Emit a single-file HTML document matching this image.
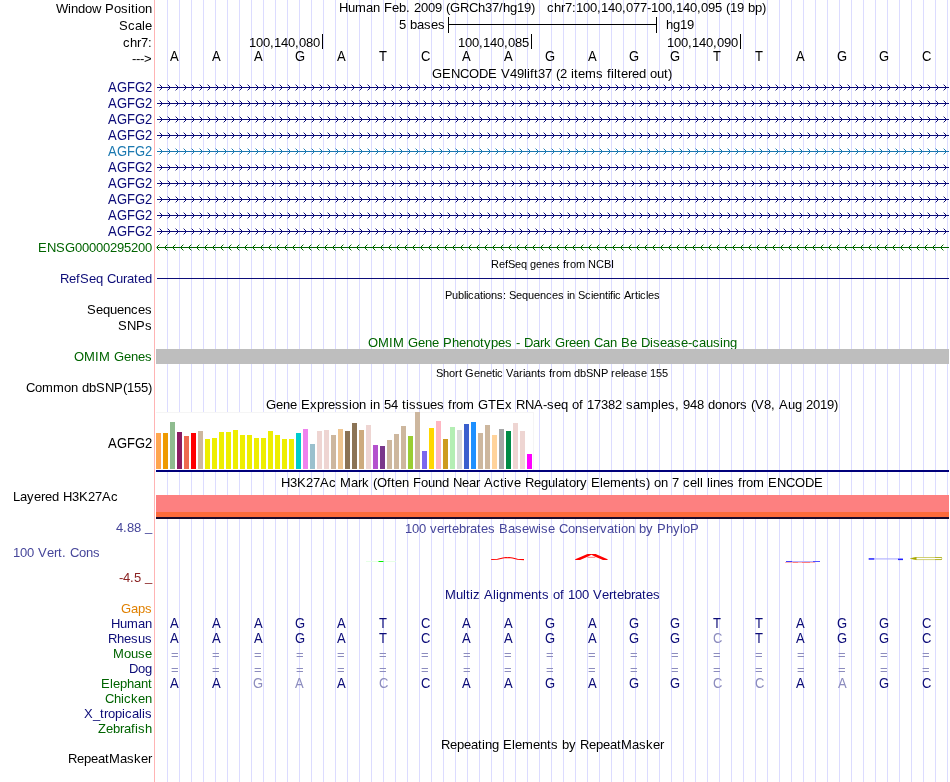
<!DOCTYPE html>
<html><head><meta charset="utf-8"><title>UCSC Genome Browser chr7:100,140,077-100,140,095</title>
<style>
html,body{margin:0;padding:0;background:#fff;}
svg{display:block;will-change:transform;font-family:"Liberation Sans",sans-serif;}
</style></head><body>
<svg width="950" height="782" viewBox="0 0 950 782">
<rect width="950" height="782" fill="#fff"/>
<path d="M167.5 0V782 M179.5 0V782 M191.5 0V782 M203.5 0V782 M215.5 0V782 M227.5 0V782 M239.5 0V782 M251.5 0V782 M263.5 0V782 M275.5 0V782 M287.5 0V782 M299.5 0V782 M311.5 0V782 M323.5 0V782 M335.5 0V782 M347.5 0V782 M359.5 0V782 M371.5 0V782 M383.5 0V782 M395.5 0V782 M407.5 0V782 M419.5 0V782 M431.5 0V782 M443.5 0V782 M455.5 0V782 M467.5 0V782 M479.5 0V782 M491.5 0V782 M503.5 0V782 M515.5 0V782 M527.5 0V782 M539.5 0V782 M551.5 0V782 M563.5 0V782 M575.5 0V782 M587.5 0V782 M599.5 0V782 M611.5 0V782 M623.5 0V782 M635.5 0V782 M647.5 0V782 M659.5 0V782 M671.5 0V782 M683.5 0V782 M695.5 0V782 M707.5 0V782 M719.5 0V782 M731.5 0V782 M743.5 0V782 M755.5 0V782 M767.5 0V782 M779.5 0V782 M791.5 0V782 M803.5 0V782 M815.5 0V782 M827.5 0V782 M839.5 0V782 M851.5 0V782 M863.5 0V782 M875.5 0V782 M887.5 0V782 M899.5 0V782 M911.5 0V782 M923.5 0V782 M935.5 0V782 M947.5 0V782" stroke="#dcdcff" stroke-width="1" fill="none" shape-rendering="crispEdges"/>
<rect x="154" y="0" width="1" height="782" fill="#ffb4b4" shape-rendering="crispEdges"/>
<text x="56 68 71 78 85 92 101 105 114 121 128 131 135 138 145" y="13" fill="#000" font-size="13" >Window Position</text>
<text x="119 128 135 142 145" y="29.5" fill="#000" font-size="13" >Scale</text>
<text x="123 130 137 141 148" y="46.5" fill="#000" font-size="13" >chr7:</text>
<text x="132 136 140 144" y="63" fill="#000" font-size="13" >---&gt;</text>
<text x="339 348 355 366 373 380 384 392 399 406 410 414 421 428 435 442 446 450 460 469 478 485 492 499 503 510 517 524 531 535 539 543 547 554 561 565 572 576 583 590 597 601 608 615 622 626 633 640 647 651 658 665 672 676 683 690 697 701 708 715 722 726 730 737 744 748 755 762" y="12" fill="#000" font-size="13" xml:space="preserve" style="white-space:pre">Human Feb. 2009 (GRCh37/hg19)   chr7:100,140,077-100,140,095 (19 bp)</text>
<text x="399 406 410 417 424 431 438" y="28.5" fill="#000" font-size="13" >5 bases</text>
<text x="666 673 680 687" y="28.5" fill="#000" font-size="13" >hg19</text>
<rect x="448" y="24" width="209" height="1" fill="#000" shape-rendering="crispEdges"/>
<rect x="448" y="17" width="1" height="16" fill="#000" shape-rendering="crispEdges"/>
<rect x="656" y="17" width="1" height="16" fill="#000" shape-rendering="crispEdges"/>
<rect x="322" y="34" width="1" height="15" fill="#000" shape-rendering="crispEdges"/>
<text x="249 256 263 270 274 281 288 295 299 306 313" y="47" fill="#000" font-size="13" >100,140,080</text>
<rect x="531" y="34" width="1" height="15" fill="#000" shape-rendering="crispEdges"/>
<text x="458 465 472 479 483 490 497 504 508 515 522" y="47" fill="#000" font-size="13" >100,140,085</text>
<rect x="740" y="34" width="1" height="15" fill="#000" shape-rendering="crispEdges"/>
<text x="667 674 681 688 692 699 706 713 717 724 731" y="47" fill="#000" font-size="13" >100,140,090</text>
<text x="170" y="0" transform="translate(0 60.5) scale(1 1.1)" fill="#000" font-size="13" >A</text>
<text x="212" y="0" transform="translate(0 60.5) scale(1 1.1)" fill="#000" font-size="13" >A</text>
<text x="254" y="0" transform="translate(0 60.5) scale(1 1.1)" fill="#000" font-size="13" >A</text>
<text x="295" y="0" transform="translate(0 60.5) scale(1 1.1)" fill="#000" font-size="13" >G</text>
<text x="337" y="0" transform="translate(0 60.5) scale(1 1.1)" fill="#000" font-size="13" >A</text>
<text x="379" y="0" transform="translate(0 60.5) scale(1 1.1)" fill="#000" font-size="13" >T</text>
<text x="421" y="0" transform="translate(0 60.5) scale(1 1.1)" fill="#000" font-size="13" >C</text>
<text x="462" y="0" transform="translate(0 60.5) scale(1 1.1)" fill="#000" font-size="13" >A</text>
<text x="504" y="0" transform="translate(0 60.5) scale(1 1.1)" fill="#000" font-size="13" >A</text>
<text x="545" y="0" transform="translate(0 60.5) scale(1 1.1)" fill="#000" font-size="13" >G</text>
<text x="588" y="0" transform="translate(0 60.5) scale(1 1.1)" fill="#000" font-size="13" >A</text>
<text x="629" y="0" transform="translate(0 60.5) scale(1 1.1)" fill="#000" font-size="13" >G</text>
<text x="670" y="0" transform="translate(0 60.5) scale(1 1.1)" fill="#000" font-size="13" >G</text>
<text x="713" y="0" transform="translate(0 60.5) scale(1 1.1)" fill="#000" font-size="13" >T</text>
<text x="755" y="0" transform="translate(0 60.5) scale(1 1.1)" fill="#000" font-size="13" >T</text>
<text x="796" y="0" transform="translate(0 60.5) scale(1 1.1)" fill="#000" font-size="13" >A</text>
<text x="837" y="0" transform="translate(0 60.5) scale(1 1.1)" fill="#000" font-size="13" >G</text>
<text x="879" y="0" transform="translate(0 60.5) scale(1 1.1)" fill="#000" font-size="13" >G</text>
<text x="922" y="0" transform="translate(0 60.5) scale(1 1.1)" fill="#000" font-size="13" >C</text>
<text x="432 442 451 460 469 479 488 497 501 510 517 524 527 530 534 538 545 552 556 560 567 571 574 578 585 596 603 607 611 614 617 621 628 632 639 646 650 657 664 668" y="78" fill="#000" font-size="13" >GENCODE V49lift37 (2 items filtered out)</text>
<pattern id="pn" patternUnits="userSpaceOnUse" x="156" y="84" width="8" height="16"><g fill="#0c0c78" shape-rendering="crispEdges"><rect x="5" y="2" width="1" height="1"/><rect x="5" y="4" width="1" height="1"/><rect x="4" y="1" width="1" height="1"/><rect x="4" y="5" width="1" height="1"/><rect x="3" y="0" width="1" height="1" opacity="0.4"/><rect x="3" y="6" width="1" height="1" opacity="0.4"/></g></pattern>
<pattern id="pt" patternUnits="userSpaceOnUse" x="156" y="84" width="8" height="16"><g fill="#1a78b0" shape-rendering="crispEdges"><rect x="5" y="2" width="1" height="1"/><rect x="5" y="4" width="1" height="1"/><rect x="4" y="1" width="1" height="1"/><rect x="4" y="5" width="1" height="1"/><rect x="3" y="0" width="1" height="1" opacity="0.4"/><rect x="3" y="6" width="1" height="1" opacity="0.4"/></g></pattern>
<pattern id="pg" patternUnits="userSpaceOnUse" x="156" y="84" width="8" height="16"><g fill="#006400" shape-rendering="crispEdges"><rect x="1" y="2" width="1" height="1"/><rect x="1" y="4" width="1" height="1"/><rect x="2" y="1" width="1" height="1"/><rect x="2" y="5" width="1" height="1"/><rect x="3" y="0" width="1" height="1" opacity="0.4"/><rect x="3" y="6" width="1" height="1" opacity="0.4"/></g></pattern>
<text x="108 117 127 135 145" y="0" transform="translate(0 92) scale(1 1.1)" fill="#0c0c78" font-size="13" >AGFG2</text>
<rect x="157" y="87" width="792" height="1" fill="#0c0c78" shape-rendering="crispEdges"/>
<rect x="156" y="84" width="793" height="7" fill="url(#pn)" />
<text x="108 117 127 135 145" y="0" transform="translate(0 108) scale(1 1.1)" fill="#0c0c78" font-size="13" >AGFG2</text>
<rect x="157" y="103" width="792" height="1" fill="#0c0c78" shape-rendering="crispEdges"/>
<rect x="156" y="100" width="793" height="7" fill="url(#pn)" />
<text x="108 117 127 135 145" y="0" transform="translate(0 124) scale(1 1.1)" fill="#0c0c78" font-size="13" >AGFG2</text>
<rect x="157" y="119" width="792" height="1" fill="#0c0c78" shape-rendering="crispEdges"/>
<rect x="156" y="116" width="793" height="7" fill="url(#pn)" />
<text x="108 117 127 135 145" y="0" transform="translate(0 140) scale(1 1.1)" fill="#0c0c78" font-size="13" >AGFG2</text>
<rect x="157" y="135" width="792" height="1" fill="#0c0c78" shape-rendering="crispEdges"/>
<rect x="156" y="132" width="793" height="7" fill="url(#pn)" />
<text x="108 117 127 135 145" y="0" transform="translate(0 156) scale(1 1.1)" fill="#1a78b0" font-size="13" >AGFG2</text>
<rect x="157" y="151" width="792" height="1" fill="#1a78b0" shape-rendering="crispEdges"/>
<rect x="156" y="148" width="793" height="7" fill="url(#pt)" />
<text x="108 117 127 135 145" y="0" transform="translate(0 172) scale(1 1.1)" fill="#0c0c78" font-size="13" >AGFG2</text>
<rect x="157" y="167" width="792" height="1" fill="#0c0c78" shape-rendering="crispEdges"/>
<rect x="156" y="164" width="793" height="7" fill="url(#pn)" />
<text x="108 117 127 135 145" y="0" transform="translate(0 188) scale(1 1.1)" fill="#0c0c78" font-size="13" >AGFG2</text>
<rect x="157" y="183" width="792" height="1" fill="#0c0c78" shape-rendering="crispEdges"/>
<rect x="156" y="180" width="793" height="7" fill="url(#pn)" />
<text x="108 117 127 135 145" y="0" transform="translate(0 204) scale(1 1.1)" fill="#0c0c78" font-size="13" >AGFG2</text>
<rect x="157" y="199" width="792" height="1" fill="#0c0c78" shape-rendering="crispEdges"/>
<rect x="156" y="196" width="793" height="7" fill="url(#pn)" />
<text x="108 117 127 135 145" y="0" transform="translate(0 220) scale(1 1.1)" fill="#0c0c78" font-size="13" >AGFG2</text>
<rect x="157" y="215" width="792" height="1" fill="#0c0c78" shape-rendering="crispEdges"/>
<rect x="156" y="212" width="793" height="7" fill="url(#pn)" />
<text x="108 117 127 135 145" y="0" transform="translate(0 236) scale(1 1.1)" fill="#0c0c78" font-size="13" >AGFG2</text>
<rect x="157" y="231" width="792" height="1" fill="#0c0c78" shape-rendering="crispEdges"/>
<rect x="156" y="228" width="793" height="7" fill="url(#pn)" />
<text x="38 47 56 65 75 82 89 96 103 110 117 124 131 138 145" y="252" fill="#006400" font-size="13" >ENSG00000295200</text>
<rect x="157" y="247" width="792" height="1" fill="#006400" shape-rendering="crispEdges"/>
<rect x="156" y="247" width="1" height="1" fill="#006400" opacity="0.5" shape-rendering="crispEdges"/>
<rect x="156" y="244" width="793" height="7" fill="url(#pg)" />
<text x="491 499 505 508 515 521 527 530 536 542 548 554 560 563 566 570 576 585 588 596 604 611" y="268" fill="#000" font-size="11" >RefSeq genes from NCBI</text>
<text x="60 69 76 80 89 96 103 107 116 123 127 134 138 145" y="283" fill="#0c0c78" font-size="13" >RefSeq Curated</text>
<rect x="157" y="278" width="792" height="1" fill="#0c0c78" shape-rendering="crispEdges"/>
<text x="445 452 458 464 466 468 474 480 483 485 491 497 503 506 509 516 522 528 534 540 546 552 558 564 567 569 575 578 585 591 593 599 605 608 610 613 615 621 624 631 635 638 640 646 648 654" y="298.5" fill="#000" font-size="11" >Publications: Sequences in Scientific Articles</text>
<text x="87 96 103 110 117 124 131 138 145" y="314" fill="#000" font-size="13" >Sequences</text>
<text x="118 127 136 145" y="330" fill="#000" font-size="13" >SNPs</text>
<text x="368 378 389 393 404 408 418 425 432 439 443 452 459 466 473 480 484 491 498 505 512 516 520 524 533 540 544 551 555 565 569 576 583 590 594 603 610 617 621 630 637 641 650 653 660 667 674 681 688 692 699 706 713 720 723 730" y="347" fill="#006400" font-size="13" >OMIM Gene Phenotypes - Dark Green Can Be Disease-causing</text>
<text x="74 84 95 99 110 114 124 131 138 145" y="361" fill="#006400" font-size="13" >OMIM Genes</text>
<rect x="156" y="349" width="793" height="15" fill="#bebebe" shape-rendering="crispEdges"/>
<text x="436 443 449 455 459 462 465 474 480 486 492 495 497 503 506 513 519 523 525 531 537 540 546 549 552 556 562 571 574 580 586 593 601 608 611 615 621 623 629 635 641 647 650 656 662" y="376.5" fill="#000" font-size="11" >Short Genetic Variants from dbSNP release 155</text>
<text x="26 35 42 53 64 71 78 82 89 96 105 114 123 127 134 141 148" y="392" fill="#000" font-size="13" >Common dbSNP(155)</text>
<text x="266 276 283 290 297 301 310 317 324 328 335 342 349 352 359 366 370 373 380 384 391 398 402 406 409 416 423 430 437 444 448 452 456 463 474 478 488 496 505 512 516 525 534 543 547 554 561 568 572 579 583 587 594 601 608 615 622 626 633 640 651 658 661 668 675 679 683 690 697 704 708 715 722 729 736 740 747 751 755 764 771 775 779 788 795 802 806 813 820 827 834" y="408.6" fill="#000" font-size="13" >Gene Expression in 54 tissues from GTEx RNA-seq of 17382 samples, 948 donors (V8, Aug 2019)</text>
<text x="108 117 127 135 145" y="0" transform="translate(0 448) scale(1 1.1)" fill="#000" font-size="13" >AGFG2</text>
<rect x="156" y="412" width="378" height="58" fill="#fff" shape-rendering="crispEdges"/>
<rect x="156" y="412" width="378" height="1" fill="#f5f5f5" shape-rendering="crispEdges"/>
<rect x="533" y="412" width="1" height="58" fill="#f5f5f5" shape-rendering="crispEdges"/>
<rect x="156" y="433" width="5" height="36" fill="#ffa54f" shape-rendering="crispEdges"/>
<rect x="163" y="433" width="5" height="36" fill="#ee9a00" shape-rendering="crispEdges"/>
<rect x="170" y="422" width="5" height="47" fill="#8fbc8f" shape-rendering="crispEdges"/>
<rect x="177" y="432" width="5" height="37" fill="#8b1c62" shape-rendering="crispEdges"/>
<rect x="184" y="436" width="5" height="33" fill="#ee6a50" shape-rendering="crispEdges"/>
<rect x="191" y="433" width="5" height="36" fill="#ff0000" shape-rendering="crispEdges"/>
<rect x="198" y="431" width="5" height="38" fill="#cdb79e" shape-rendering="crispEdges"/>
<rect x="205" y="439" width="5" height="30" fill="#eeee00" shape-rendering="crispEdges"/>
<rect x="212" y="438" width="5" height="31" fill="#eeee00" shape-rendering="crispEdges"/>
<rect x="219" y="432" width="5" height="37" fill="#eeee00" shape-rendering="crispEdges"/>
<rect x="226" y="432" width="5" height="37" fill="#eeee00" shape-rendering="crispEdges"/>
<rect x="233" y="430" width="5" height="39" fill="#eeee00" shape-rendering="crispEdges"/>
<rect x="240" y="435" width="5" height="34" fill="#eeee00" shape-rendering="crispEdges"/>
<rect x="247" y="435" width="5" height="34" fill="#eeee00" shape-rendering="crispEdges"/>
<rect x="254" y="438" width="5" height="31" fill="#eeee00" shape-rendering="crispEdges"/>
<rect x="261" y="438" width="5" height="31" fill="#eeee00" shape-rendering="crispEdges"/>
<rect x="268" y="431" width="5" height="38" fill="#eeee00" shape-rendering="crispEdges"/>
<rect x="275" y="435" width="5" height="34" fill="#eeee00" shape-rendering="crispEdges"/>
<rect x="282" y="439" width="5" height="30" fill="#eeee00" shape-rendering="crispEdges"/>
<rect x="289" y="439" width="5" height="30" fill="#eeee00" shape-rendering="crispEdges"/>
<rect x="296" y="433" width="5" height="36" fill="#00cdcd" shape-rendering="crispEdges"/>
<rect x="303" y="429" width="5" height="40" fill="#ee82ee" shape-rendering="crispEdges"/>
<rect x="310" y="444" width="5" height="25" fill="#9ac0cd" shape-rendering="crispEdges"/>
<rect x="317" y="431" width="5" height="38" fill="#eed5d2" shape-rendering="crispEdges"/>
<rect x="324" y="430" width="5" height="39" fill="#eed5d2" shape-rendering="crispEdges"/>
<rect x="331" y="435" width="5" height="34" fill="#cdb79e" shape-rendering="crispEdges"/>
<rect x="338" y="429" width="5" height="40" fill="#eec591" shape-rendering="crispEdges"/>
<rect x="345" y="431" width="5" height="38" fill="#8b7355" shape-rendering="crispEdges"/>
<rect x="352" y="423" width="5" height="46" fill="#8b7355" shape-rendering="crispEdges"/>
<rect x="359" y="430" width="5" height="39" fill="#cdaa7d" shape-rendering="crispEdges"/>
<rect x="366" y="425" width="5" height="44" fill="#eed5d2" shape-rendering="crispEdges"/>
<rect x="373" y="445" width="5" height="24" fill="#b452cd" shape-rendering="crispEdges"/>
<rect x="380" y="446" width="5" height="23" fill="#7a378b" shape-rendering="crispEdges"/>
<rect x="387" y="440" width="5" height="29" fill="#cdb79e" shape-rendering="crispEdges"/>
<rect x="394" y="434" width="5" height="35" fill="#cdb79e" shape-rendering="crispEdges"/>
<rect x="401" y="426" width="5" height="43" fill="#cdb79e" shape-rendering="crispEdges"/>
<rect x="408" y="436" width="5" height="33" fill="#9acd32" shape-rendering="crispEdges"/>
<rect x="415" y="412" width="5" height="57" fill="#cdb79e" shape-rendering="crispEdges"/>
<rect x="422" y="451" width="5" height="18" fill="#7a67ee" shape-rendering="crispEdges"/>
<rect x="429" y="428" width="5" height="41" fill="#ffd700" shape-rendering="crispEdges"/>
<rect x="436" y="421" width="5" height="48" fill="#ffb6c1" shape-rendering="crispEdges"/>
<rect x="443" y="439" width="5" height="30" fill="#cd9b1d" shape-rendering="crispEdges"/>
<rect x="450" y="427" width="5" height="42" fill="#b4eeb4" shape-rendering="crispEdges"/>
<rect x="457" y="430" width="5" height="39" fill="#d9d9d9" shape-rendering="crispEdges"/>
<rect x="464" y="424" width="5" height="45" fill="#3a5fcd" shape-rendering="crispEdges"/>
<rect x="471" y="422" width="5" height="47" fill="#1e90ff" shape-rendering="crispEdges"/>
<rect x="478" y="433" width="5" height="36" fill="#cdb79e" shape-rendering="crispEdges"/>
<rect x="485" y="425" width="5" height="44" fill="#cdb79e" shape-rendering="crispEdges"/>
<rect x="492" y="435" width="5" height="34" fill="#ffd39b" shape-rendering="crispEdges"/>
<rect x="499" y="429" width="5" height="40" fill="#a6a6a6" shape-rendering="crispEdges"/>
<rect x="506" y="431" width="5" height="38" fill="#008b45" shape-rendering="crispEdges"/>
<rect x="513" y="423" width="5" height="46" fill="#eed5d2" shape-rendering="crispEdges"/>
<rect x="520" y="431" width="5" height="38" fill="#eed5d2" shape-rendering="crispEdges"/>
<rect x="527" y="454" width="5" height="15" fill="#ff00ff" shape-rendering="crispEdges"/>
<rect x="156" y="470" width="793" height="2" fill="#00007b" shape-rendering="crispEdges"/>
<text x="281 290 297 306 313 320 329 336 340 351 358 362 369 373 377 387 391 395 402 409 413 421 428 435 442 449 453 462 469 476 480 484 493 500 504 507 514 521 525 534 541 548 555 558 565 569 576 580 587 591 600 603 610 621 628 635 639 646 650 654 661 668 672 679 683 690 697 700 703 707 710 713 720 727 734 738 742 746 753 764 768 777 786 795 805 814" y="487" fill="#000" font-size="13" >H3K27Ac Mark (Often Found Near Active Regulatory Elements) on 7 cell lines from ENCODE</text>
<text x="13 20 27 34 41 45 52 59 63 72 79 88 95 102 111" y="501" fill="#000" font-size="13" >Layered H3K27Ac</text>
<rect x="156" y="495" width="793" height="17" fill="#fd8080" shape-rendering="crispEdges"/>
<rect x="156" y="512" width="793" height="5" fill="#fd6a3c" shape-rendering="crispEdges"/>
<rect x="156" y="517" width="793" height="2" fill="#190a2d" shape-rendering="crispEdges"/>
<text x="405 412 419 426 430 437 444 448 452 459 466 470 477 481 488 495 499 508 515 522 529 538 541 548 555 559 568 575 582 589 596 600 607 614 618 621 628 635 639 646 653 657 666 673 680 683 690" y="533" fill="#46469a" font-size="13" >100 vertebrates Basewise Conservation by PhyloP</text>
<text x="116 123 127 134 141 145" y="532" fill="#46469a" font-size="13" dy="0 0 0 0 0 -0.9">4.88 _</text>
<text x="13 20 27 34 38 47 54 58 62 66 70 79 86 93" y="557" fill="#46469a" font-size="13" >100 Vert. Cons</text>
<text x="119 123 130 134 141 145" y="582" fill="#8b2323" font-size="13" dy="0 0 0 0 0 -0.9">-4.5 _</text>
<rect x="366" y="561" width="30" height="1" fill="#e6ffe6" shape-rendering="crispEdges"/>
<rect x="378.4" y="561" width="5.2" height="1" fill="#00f000" rx="0.5"/>
<path d="M491.2 559.5 L497.5 559.3 L503 558 L506 557.5 L507.5 557.8 L509 557.5 L512.5 558 L517.5 559.2 L524 559.6" stroke="#ff0000" stroke-width="1.1" fill="none" stroke-linejoin="round"/>
<path d="M575.2 559.3 L587.5 553.9 L595.6 553.9 L607.6 559.3 L607.6 560 L603 560 L595.3 556.7 L591.4 554.8 L587.5 556.7 L580 560 L575.2 560 Z" fill="#ff0000"/>
<path d="M587.5 557.3H595.3" stroke="#ff4040" stroke-width="0.7"/>
<rect x="786" y="561" width="6.5" height="1" fill="#4040ff" />
<rect x="792.5" y="561" width="20.5" height="1" fill="#b4b4ff" />
<rect x="813" y="561" width="7" height="1" fill="#5050ff" />
<rect x="785" y="562" width="30" height="0.8" fill="#ffa0a0" />
<rect x="793" y="562" width="5" height="0.8" fill="#ff7070" />
<rect x="802" y="562" width="8" height="0.8" fill="#ff7070" />
<rect x="868.7" y="558.3" width="34" height="1.2" fill="#b4b4ff" />
<rect x="868.7" y="558.2" width="5.5" height="1.5" fill="#3030ff" />
<rect x="898" y="558.7" width="5" height="1.4" fill="#2020ff" />
<path d="M910.5 558.5 L916 557.5 H941 Q942.5 558.5 941 559.6 H916 Z" stroke="#c4c450" stroke-width="0.8" fill="#fff"/>
<path d="M910.3 558.5 L916.5 557.1 V560 Z" fill="#a8a800"/>
<rect x="935" y="557.2" width="7" height="0.8" fill="#b0b020" />
<rect x="935" y="559.2" width="7" height="0.8" fill="#b0b020" />
<text x="445 456 463 466 470 473 480 484 493 496 499 506 513 524 531 538 542 549 553 560 564 568 575 582 589 593 602 609 613 617 624 631 635 642 646 653" y="599" fill="#0c0c78" font-size="13" >Multiz Alignments of 100 Vertebrates</text>
<text x="121 131 138 145" y="613" fill="#e08000" font-size="13" >Gaps</text>
<text x="111 120 127 138 145" y="628" fill="#0c0c78" font-size="13" >Human</text>
<text x="108 117 124 131 138 145" y="643" fill="#0c0c78" font-size="13" >Rhesus</text>
<text x="113 124 131 138 145" y="658" fill="#006400" font-size="13" >Mouse</text>
<text x="129 138 145" y="673" fill="#0c0c78" font-size="13" >Dog</text>
<text x="101 110 113 120 127 134 141 148" y="688" fill="#006400" font-size="13" >Elephant</text>
<text x="105 114 121 124 131 138 145" y="703" fill="#006400" font-size="13" >Chicken</text>
<text x="84 93 100 104 108 115 122 125 132 139 142 145" y="718" fill="#0c0c78" font-size="13" >X_tropicalis</text>
<text x="98 106 113 120 124 131 135 138 145" y="733" fill="#006400" font-size="13" >Zebrafish</text>
<text x="170" y="0" transform="translate(0 628) scale(1 1.1)" fill="#0c0c78" font-size="13" >A</text>
<text x="212" y="0" transform="translate(0 628) scale(1 1.1)" fill="#0c0c78" font-size="13" >A</text>
<text x="254" y="0" transform="translate(0 628) scale(1 1.1)" fill="#0c0c78" font-size="13" >A</text>
<text x="295" y="0" transform="translate(0 628) scale(1 1.1)" fill="#0c0c78" font-size="13" >G</text>
<text x="337" y="0" transform="translate(0 628) scale(1 1.1)" fill="#0c0c78" font-size="13" >A</text>
<text x="379" y="0" transform="translate(0 628) scale(1 1.1)" fill="#0c0c78" font-size="13" >T</text>
<text x="421" y="0" transform="translate(0 628) scale(1 1.1)" fill="#0c0c78" font-size="13" >C</text>
<text x="462" y="0" transform="translate(0 628) scale(1 1.1)" fill="#0c0c78" font-size="13" >A</text>
<text x="504" y="0" transform="translate(0 628) scale(1 1.1)" fill="#0c0c78" font-size="13" >A</text>
<text x="545" y="0" transform="translate(0 628) scale(1 1.1)" fill="#0c0c78" font-size="13" >G</text>
<text x="588" y="0" transform="translate(0 628) scale(1 1.1)" fill="#0c0c78" font-size="13" >A</text>
<text x="629" y="0" transform="translate(0 628) scale(1 1.1)" fill="#0c0c78" font-size="13" >G</text>
<text x="670" y="0" transform="translate(0 628) scale(1 1.1)" fill="#0c0c78" font-size="13" >G</text>
<text x="713" y="0" transform="translate(0 628) scale(1 1.1)" fill="#0c0c78" font-size="13" >T</text>
<text x="755" y="0" transform="translate(0 628) scale(1 1.1)" fill="#0c0c78" font-size="13" >T</text>
<text x="796" y="0" transform="translate(0 628) scale(1 1.1)" fill="#0c0c78" font-size="13" >A</text>
<text x="837" y="0" transform="translate(0 628) scale(1 1.1)" fill="#0c0c78" font-size="13" >G</text>
<text x="879" y="0" transform="translate(0 628) scale(1 1.1)" fill="#0c0c78" font-size="13" >G</text>
<text x="922" y="0" transform="translate(0 628) scale(1 1.1)" fill="#0c0c78" font-size="13" >C</text>
<text x="170" y="0" transform="translate(0 643) scale(1 1.1)" fill="#0c0c78" font-size="13" >A</text>
<text x="212" y="0" transform="translate(0 643) scale(1 1.1)" fill="#0c0c78" font-size="13" >A</text>
<text x="254" y="0" transform="translate(0 643) scale(1 1.1)" fill="#0c0c78" font-size="13" >A</text>
<text x="295" y="0" transform="translate(0 643) scale(1 1.1)" fill="#0c0c78" font-size="13" >G</text>
<text x="337" y="0" transform="translate(0 643) scale(1 1.1)" fill="#0c0c78" font-size="13" >A</text>
<text x="379" y="0" transform="translate(0 643) scale(1 1.1)" fill="#0c0c78" font-size="13" >T</text>
<text x="421" y="0" transform="translate(0 643) scale(1 1.1)" fill="#0c0c78" font-size="13" >C</text>
<text x="462" y="0" transform="translate(0 643) scale(1 1.1)" fill="#0c0c78" font-size="13" >A</text>
<text x="504" y="0" transform="translate(0 643) scale(1 1.1)" fill="#0c0c78" font-size="13" >A</text>
<text x="545" y="0" transform="translate(0 643) scale(1 1.1)" fill="#0c0c78" font-size="13" >G</text>
<text x="588" y="0" transform="translate(0 643) scale(1 1.1)" fill="#0c0c78" font-size="13" >A</text>
<text x="629" y="0" transform="translate(0 643) scale(1 1.1)" fill="#0c0c78" font-size="13" >G</text>
<text x="670" y="0" transform="translate(0 643) scale(1 1.1)" fill="#0c0c78" font-size="13" >G</text>
<text x="713" y="0" transform="translate(0 643) scale(1 1.1)" fill="#8c8cbe" font-size="13" >C</text>
<text x="755" y="0" transform="translate(0 643) scale(1 1.1)" fill="#0c0c78" font-size="13" >T</text>
<text x="796" y="0" transform="translate(0 643) scale(1 1.1)" fill="#0c0c78" font-size="13" >A</text>
<text x="837" y="0" transform="translate(0 643) scale(1 1.1)" fill="#0c0c78" font-size="13" >G</text>
<text x="879" y="0" transform="translate(0 643) scale(1 1.1)" fill="#0c0c78" font-size="13" >G</text>
<text x="922" y="0" transform="translate(0 643) scale(1 1.1)" fill="#0c0c78" font-size="13" >C</text>
<text x="170" y="0" transform="translate(0 688) scale(1 1.1)" fill="#0c0c78" font-size="13" >A</text>
<text x="212" y="0" transform="translate(0 688) scale(1 1.1)" fill="#0c0c78" font-size="13" >A</text>
<text x="253" y="0" transform="translate(0 688) scale(1 1.1)" fill="#8c8cbe" font-size="13" >G</text>
<text x="295" y="0" transform="translate(0 688) scale(1 1.1)" fill="#8c8cbe" font-size="13" >A</text>
<text x="337" y="0" transform="translate(0 688) scale(1 1.1)" fill="#0c0c78" font-size="13" >A</text>
<text x="379" y="0" transform="translate(0 688) scale(1 1.1)" fill="#8c8cbe" font-size="13" >C</text>
<text x="421" y="0" transform="translate(0 688) scale(1 1.1)" fill="#0c0c78" font-size="13" >C</text>
<text x="462" y="0" transform="translate(0 688) scale(1 1.1)" fill="#0c0c78" font-size="13" >A</text>
<text x="504" y="0" transform="translate(0 688) scale(1 1.1)" fill="#0c0c78" font-size="13" >A</text>
<text x="545" y="0" transform="translate(0 688) scale(1 1.1)" fill="#0c0c78" font-size="13" >G</text>
<text x="588" y="0" transform="translate(0 688) scale(1 1.1)" fill="#0c0c78" font-size="13" >A</text>
<text x="629" y="0" transform="translate(0 688) scale(1 1.1)" fill="#0c0c78" font-size="13" >G</text>
<text x="670" y="0" transform="translate(0 688) scale(1 1.1)" fill="#0c0c78" font-size="13" >G</text>
<text x="713" y="0" transform="translate(0 688) scale(1 1.1)" fill="#8c8cbe" font-size="13" >C</text>
<text x="755" y="0" transform="translate(0 688) scale(1 1.1)" fill="#8c8cbe" font-size="13" >C</text>
<text x="796" y="0" transform="translate(0 688) scale(1 1.1)" fill="#0c0c78" font-size="13" >A</text>
<text x="838" y="0" transform="translate(0 688) scale(1 1.1)" fill="#8c8cbe" font-size="13" >A</text>
<text x="879" y="0" transform="translate(0 688) scale(1 1.1)" fill="#0c0c78" font-size="13" >G</text>
<text x="922" y="0" transform="translate(0 688) scale(1 1.1)" fill="#0c0c78" font-size="13" >C</text>
<text x="171" y="658.8" fill="#8c8cbe" font-size="13" >=</text>
<text x="212" y="658.8" fill="#8c8cbe" font-size="13" >=</text>
<text x="254" y="658.8" fill="#8c8cbe" font-size="13" >=</text>
<text x="296" y="658.8" fill="#8c8cbe" font-size="13" >=</text>
<text x="337" y="658.8" fill="#8c8cbe" font-size="13" >=</text>
<text x="379" y="658.8" fill="#8c8cbe" font-size="13" >=</text>
<text x="421" y="658.8" fill="#8c8cbe" font-size="13" >=</text>
<text x="463" y="658.8" fill="#8c8cbe" font-size="13" >=</text>
<text x="504" y="658.8" fill="#8c8cbe" font-size="13" >=</text>
<text x="546" y="658.8" fill="#8c8cbe" font-size="13" >=</text>
<text x="588" y="658.8" fill="#8c8cbe" font-size="13" >=</text>
<text x="630" y="658.8" fill="#8c8cbe" font-size="13" >=</text>
<text x="671" y="658.8" fill="#8c8cbe" font-size="13" >=</text>
<text x="713" y="658.8" fill="#8c8cbe" font-size="13" >=</text>
<text x="755" y="658.8" fill="#8c8cbe" font-size="13" >=</text>
<text x="797" y="658.8" fill="#8c8cbe" font-size="13" >=</text>
<text x="838" y="658.8" fill="#8c8cbe" font-size="13" >=</text>
<text x="880" y="658.8" fill="#8c8cbe" font-size="13" >=</text>
<text x="922" y="658.8" fill="#8c8cbe" font-size="13" >=</text>
<text x="171" y="673.8" fill="#8c8cbe" font-size="13" >=</text>
<text x="212" y="673.8" fill="#8c8cbe" font-size="13" >=</text>
<text x="254" y="673.8" fill="#8c8cbe" font-size="13" >=</text>
<text x="296" y="673.8" fill="#8c8cbe" font-size="13" >=</text>
<text x="337" y="673.8" fill="#8c8cbe" font-size="13" >=</text>
<text x="379" y="673.8" fill="#8c8cbe" font-size="13" >=</text>
<text x="421" y="673.8" fill="#8c8cbe" font-size="13" >=</text>
<text x="463" y="673.8" fill="#8c8cbe" font-size="13" >=</text>
<text x="504" y="673.8" fill="#8c8cbe" font-size="13" >=</text>
<text x="546" y="673.8" fill="#8c8cbe" font-size="13" >=</text>
<text x="588" y="673.8" fill="#8c8cbe" font-size="13" >=</text>
<text x="630" y="673.8" fill="#8c8cbe" font-size="13" >=</text>
<text x="671" y="673.8" fill="#8c8cbe" font-size="13" >=</text>
<text x="713" y="673.8" fill="#8c8cbe" font-size="13" >=</text>
<text x="755" y="673.8" fill="#8c8cbe" font-size="13" >=</text>
<text x="797" y="673.8" fill="#8c8cbe" font-size="13" >=</text>
<text x="838" y="673.8" fill="#8c8cbe" font-size="13" >=</text>
<text x="880" y="673.8" fill="#8c8cbe" font-size="13" >=</text>
<text x="922" y="673.8" fill="#8c8cbe" font-size="13" >=</text>
<text x="441 450 457 464 471 478 482 485 492 499 503 512 515 522 533 540 547 551 558 562 569 576 580 589 596 603 610 617 621 632 639 646 653 660" y="749" fill="#000" font-size="13" >Repeating Elements by RepeatMasker</text>
<text x="68 77 84 91 98 105 109 120 127 134 141 148" y="763" fill="#000" font-size="13" >RepeatMasker</text>
</svg>
</body></html>
